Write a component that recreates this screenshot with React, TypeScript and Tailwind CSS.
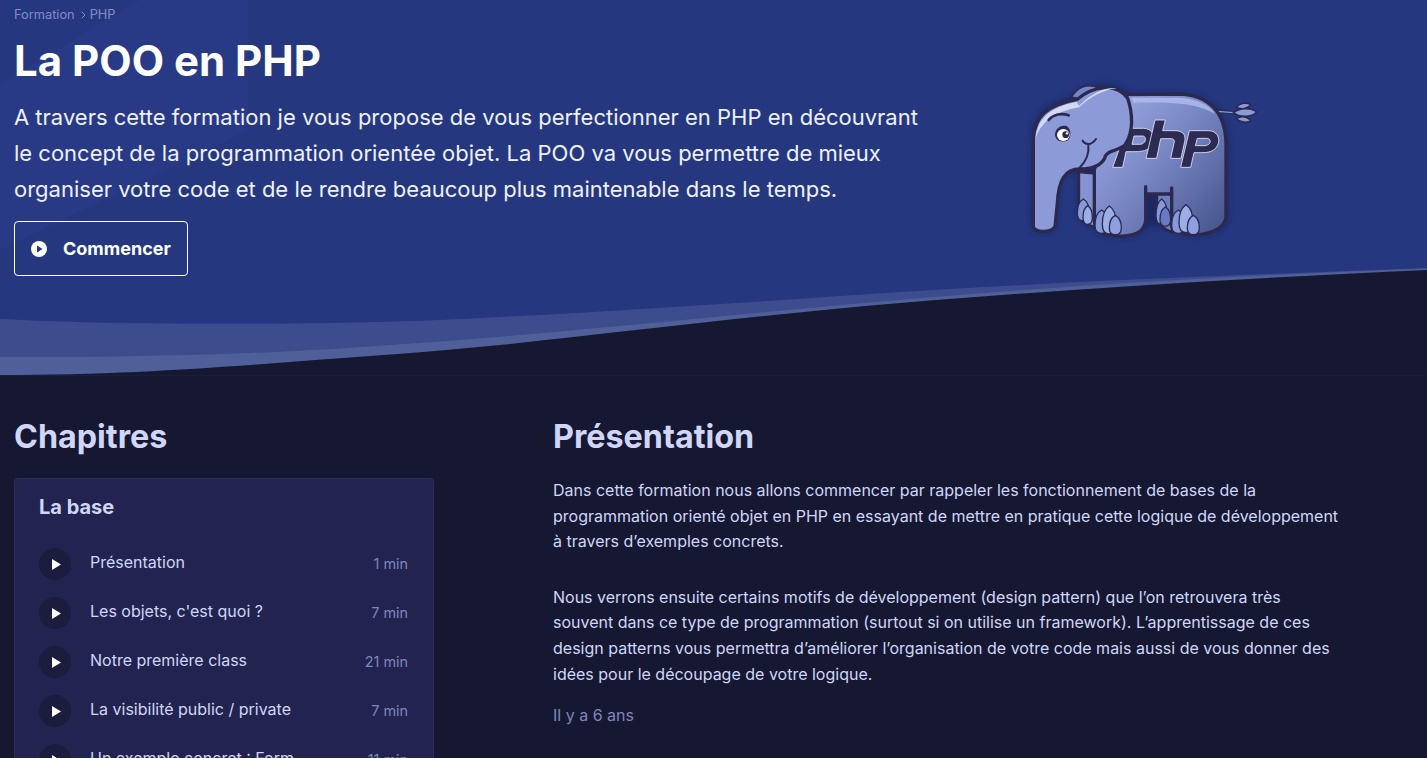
const chapters = [
  ["Présentation", "1 min"],
  ["Les objets, c'est quoi ?", "7 min"],
  ["Notre première class", "21 min"],
  ["La visibilité public / private", "7 min"],
  ["Un exemple concret : Form", "11 min"],
];

const INK = "#2b2950";

function toePath(cx: number, cy: number, rx: number, ry: number) {
  return `M${cx} ${cy - ry} C${cx + rx * 0.8} ${cy - ry * 0.75} ${cx + rx} ${cy - ry * 0.2} ${cx + rx} ${cy + ry * 0.3} C${cx + rx} ${cy + ry * 0.8} ${cx + rx * 0.55} ${cy + ry} ${cx} ${cy + ry} C${cx - rx * 0.55} ${cy + ry} ${cx - rx} ${cy + ry * 0.8} ${cx - rx} ${cy + ry * 0.3} C${cx - rx} ${cy - ry * 0.2} ${cx - rx * 0.8} ${cy - ry * 0.75} ${cx} ${cy - ry} Z`;
}

const toes: [number, number, number, number, string][] = [
  [250, 420, 18, 33, "#8899da"],
  [263, 435, 14, 28, "#9dade6"],
  [305, 455, 20, 35, "#8899da"],
  [328, 450, 21, 42, "#9dade6"],
  [346, 465, 18, 29, "#8fa0e0"],
  [485, 425, 17, 38, "#8899da"],
  [496, 440, 16, 29, "#6678c6"],
  [535, 455, 20, 35, "#8899da"],
  [558, 446, 21, 42, "#9dade6"],
  [580, 465, 18, 29, "#8fa0e0"],
];

function Elephant() {
  return (
    <svg viewBox="0 0 840 540" className="w-[280px] h-[180px] block">
      <defs>
        <linearGradient id="body" x1="0.05" y1="0.1" x2="0.95" y2="0.9">
          <stop offset="0" stopColor="#9aa7e2" />
          <stop offset="0.45" stopColor="#7a88c6" />
          <stop offset="1" stopColor="#4b5992" />
        </linearGradient>
        <filter id="halo" x="-10%" y="-10%" width="120%" height="120%">
          <feGaussianBlur stdDeviation="9" />
        </filter>
      </defs>
      <path d="M92 470 L96 200 C100 130 140 95 225 75 C270 35 350 25 388 72 L540 70 C640 75 684 130 684 220 L684 440 C680 490 620 500 560 495 L520 470 L440 470 C430 495 400 505 350 500 C310 498 285 488 280 470 L236 445 L235 310 C190 300 172 330 170 400 L165 470 C150 495 100 495 92 470 Z" fill="#141a4d" opacity="0.55" filter="url(#halo)" />

      <path d="M650 122 L702 128" stroke={INK} strokeWidth="11" />
      <path d="M650 124 L702 128" stroke="#8c9ad6" strokeWidth="4" />
      <g fill="#8c9ad6" stroke={INK} strokeWidth="5" strokeLinejoin="round">
        <path d="M708 112 C720 98 742 96 752 104 C745 116 725 120 708 112 Z" />
        <path d="M708 146 C720 158 742 160 752 152 C745 140 725 136 708 146 Z" />
        <path d="M700 128 C720 112 755 112 770 126 C755 142 720 144 700 128 Z" />
      </g>

      <path d="M213 82 C232 50 262 38 295 52 L238 86 Z" fill="#7384c8" stroke={INK} strokeWidth="6" strokeLinejoin="round" />

      <path d="M236 305 L284 310 L284 472 C262 466 238 450 236 425 Z" fill="#8594d0" stroke={INK} strokeWidth="9" strokeLinejoin="round" />
      <path d="M470 368 L518 368 L518 486 C490 480 470 460 470 430 Z" fill="#6f7fbe" stroke={INK} strokeWidth="9" strokeLinejoin="round" />

      <path d="M380 74 L535 72 C630 74 676 130 678 220 L678 440 C676 480 620 497 565 494 C535 490 515 480 515 470 L515 372 L437 372 L437 450 C435 485 405 500 350 498 C310 496 285 486 283 450 L283 300 L300 230 L380 180 Z" fill="url(#body)" stroke={INK} strokeWidth="10" strokeLinejoin="round" />
      <path d="M437 350 L437 376 M515 354 L515 376" stroke={INK} strokeWidth="10" strokeLinecap="round" />
      <path d="M395 84 L535 83 C590 86 628 102 645 132 C600 104 540 95 400 98 Z" fill="#b6c0ee" opacity="0.75" />

      <g transform="translate(300 120)" stroke="#e6e8f8" strokeWidth="2.5" strokeLinejoin="round" fill="#2e2b52" fillRule="evenodd">
        <path d="M80 55 L130 55 C158 55 167 80 160 98 C152 118 135 125 105 125 L78 125 L68 172 L38 172 Z M102 78 L128 78 C140 78 140 100 122 103 L96 103 Z" />
        <path d="M165 30 L196 30 L188 62 L225 62 C252 62 258 78 254 95 L243 145 L212 145 L222 100 C225 88 220 86 210 86 L182 86 L170 145 L138 145 Z" />
        <path d="M268 62 L325 62 C352 62 360 85 355 100 C348 120 335 128 305 128 L282 128 L272 172 L242 172 Z M292 85 L320 85 C335 85 335 105 315 107 L286 107 Z" />
      </g>

      <path d="M100 470 L100 205 C105 140 140 105 232 88 C275 50 350 35 383 85 C398 130 402 185 375 225 C350 245 318 240 314 265 C300 290 270 297 240 297 C195 297 175 330 172 400 L165 470 C150 490 105 487 100 470 Z" fill="#8c9ad7" stroke={INK} strokeWidth="10" strokeLinejoin="round" />
      <path d="M107 205 C112 150 145 112 230 96 L237 108 C280 65 320 50 350 55 C310 60 270 80 238 112 C175 122 125 150 107 205 Z" fill="#e4e8fa" opacity="0.8" />
      <path d="M146 150 C160 133 185 128 206 136" fill="none" stroke={INK} strokeWidth="8" strokeLinecap="round" />
      <path d="M165 192 C168 172 185 165 200 168 C215 178 215 205 200 213 C180 218 165 210 165 192 Z" fill={INK} />
      <ellipse cx="190" cy="195" rx="19" ry="18" fill="#ffffff" />
      <circle cx="197" cy="194" r="10" fill={INK} />
      <circle cx="201" cy="190" r="3.5" fill="#ffffff" />
      <path d="M248 212 C256 226 275 226 288 207" fill="none" stroke={INK} strokeWidth="6" strokeLinecap="round" />
      <path d="M265 224 C268 250 258 275 238 294" fill="none" stroke={INK} strokeWidth="6" strokeLinecap="round" />

      <g stroke={INK} strokeWidth="4">
        {toes.map(([cx, cy, rx, ry, fill]) => (
          <path key={`${cx}-${cy}`} d={toePath(cx, cy, rx, ry)} fill={fill} />
        ))}
      </g>
    </svg>
  );
}

function PlayDot() {
  return (
    <span className="w-8 h-8 rounded-full bg-[#1b1c3e] flex items-center justify-center shrink-0">
      <svg viewBox="0 0 9 11" className="w-[9px] h-[11px] block ml-[2px]">
        <path d="M0 0 L9 5.5 L0 11 Z" fill="#ffffff" />
      </svg>
    </span>
  );
}

export default function App() {
  return (
    <div className="h-[758px] overflow-hidden bg-[#161832] font-['Inter','Liberation_Sans',sans-serif] text-[#d0d6f8]">
      <header className="relative h-[375px] bg-[#25387f] overflow-hidden border-b border-[#1b1d3a] box-content">
        <svg viewBox="0 0 1427 375" preserveAspectRatio="none" className="absolute inset-0 w-full h-full">
          <path d="M140 0 H248 V130 L0 250 V85 Z" fill="#283a86" />
          <path d="M0 319 C60 322 110 323 167 323.5 C230 324 280 324 333 323 C390 322 450 320 500 317 C640 310 780 300 900 292 C970 288 1040 284 1100 281 C1210 276 1320 272 1427 268 V375 H0 Z" fill="#3d4c8c" />
          <path d="M0 357 C40 357 70 357 100 356.7 C150 356 200 355 250 353 C280 352 310 350 333 349 C390 345 450 341 500 336.7 C640 325 780 310 900 300 C1070 285 1250 275 1427 268.5 V375 H0 Z" fill="#4f5f99" />
          <path d="M0 375 C100 375 180 370 250 365 C340 358 420 353 500 345 C640 330 770 314 900 303 C1080 288 1250 278 1427 270 V375 Z" fill="#161832" />
        </svg>
        <div className="relative flex items-start pl-[14px]">
          <div className="w-[920px] shrink-0">
            <nav className="flex items-center pt-[7px] text-[12.8px] leading-[15px] text-[#7f8ec6]">
              <span>Formation</span>
              <svg viewBox="0 0 5 8" className="w-[5px] h-[8px] block ml-[6px] mr-[4px]">
                <path d="M0.7 0.7 L4 4 L0.7 7.3" fill="none" stroke="#7f8ec6" strokeWidth="1" />
              </svg>
              <span>PHP</span>
            </nav>
            <h1 className="mt-[9px] text-[42px] leading-[60px] font-bold text-white">La POO en PHP</h1>
            <p className="mt-[8px] text-[22px] leading-[36px] text-[#eef0fc]">
              A travers cette formation je vous propose de vous perfectionner en PHP en découvrant
              <br />
              le concept de la programmation orientée objet. La POO va vous permettre de mieux
              <br />
              organiser votre code et de le rendre beaucoup plus maintenable dans le temps.
            </p>
            <a className="mt-[14px] flex items-center w-[174px] h-[55px] rounded-[4px] border border-white pl-[16px] gap-[16px] text-[18px] font-bold text-white">
              <svg viewBox="0 0 16 16" className="w-4 h-4 block">
                <circle cx="8" cy="8" r="8" fill="#ffffff" />
                <path d="M6 4.5 L11.5 8 L6 11.5 Z" fill="#25387f" />
              </svg>
              <span>Commencer</span>
            </a>
          </div>
          <div className="ml-[66px] mt-[70px] shrink-0">
            <Elephant />
          </div>
        </div>
      </header>

      <main className="flex pl-[14px] pt-[36px]">
        <aside className="w-[420px] shrink-0">
          <h2 className="text-[32.3px] leading-[50px] font-bold">Chapitres</h2>
          <div className="mt-[16px] rounded-[4px] border border-[#2b2f5f] bg-[#22244f] pl-[24px] pr-[25px] pt-[14px] pb-6">
            <h3 className="text-[20px] leading-[28px] font-bold">La base</h3>
            <ul className="mt-[27px] flex flex-col gap-[17px]">
              {chapters.map(([title, time]) => (
                <li key={title} className="flex items-center h-8">
                  <PlayDot />
                  <span className="ml-[19px] flex-1 text-[16px] leading-[20px] -mt-[4px]">{title}</span>
                  <span className="text-[14.4px] leading-[20px] text-[#7f86bd]">{time}</span>
                </li>
              ))}
            </ul>
          </div>
        </aside>

        <article className="ml-[119px] w-[800px] shrink-0 text-[16px] leading-[25.6px]">
          <h2 className="text-[32.3px] leading-[50px] font-bold">Présentation</h2>
          <p className="mt-[16px]">
            Dans cette formation nous allons commencer par rappeler les fonctionnement de bases de la
            <br />
            programmation orienté objet en PHP en essayant de mettre en pratique cette logique de développement
            <br />
            à travers d’exemples concrets.
          </p>
          <p className="mt-[30px]">
            Nous verrons ensuite certains motifs de développement (design pattern) que l’on retrouvera très
            <br />
            souvent dans ce type de programmation (surtout si on utilise un framework). L’apprentissage de ces
            <br />
            design patterns vous permettra d’améliorer l’organisation de votre code mais aussi de vous donner des
            <br />
            idées pour le découpage de votre logique.
          </p>
          <p className="mt-[16px] text-[#7f86bd]">Il y a 6 ans</p>
        </article>
      </main>
    </div>
  );
}
